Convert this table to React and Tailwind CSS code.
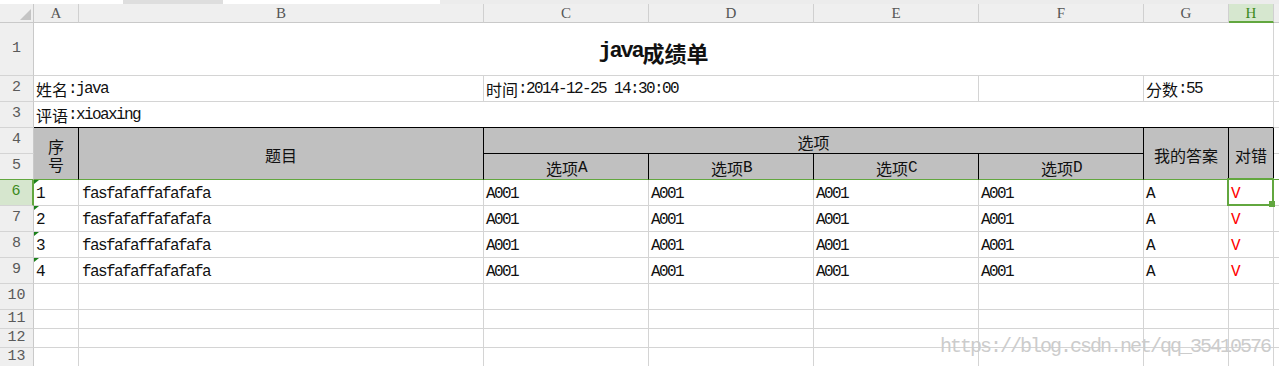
import React from "react";

const CJK = /[\u3000-\u9fff\uff00-\uffef]/;

function Mix({ text, lat = "tracking-[-1.6px]" }) {
  const parts = text.match(/[\u3000-\u9fff\uff00-\uffef]+|[^\u3000-\u9fff\uff00-\uffef]+/g) || [];
  return parts.map((p, i) =>
    CJK.test(p) ? (
      <span key={i} className="font-['Noto_Sans_CJK_SC',sans-serif]">
        {p}
      </span>
    ) : (
      <span key={i} className={lat}>
        {p}
      </span>
    )
  );
}

function Cell({ className = "", r = "border-r-[#d4d4d4]", b = "border-b-[#d4d4d4]", children }) {
  return <div className={`border-r border-b ${r} ${b} ${className}`}>{children}</div>;
}

function RH({ n, b = "border-b-[#d4d4d4]", sel = false }) {
  if (sel) {
    return (
      <div className={`border-r-2 border-b border-r-[#62a73f] ${b} bg-[#d6e6ce] flex items-center justify-center text-[15px] text-[#3b8a1c]`}>
        {n}
      </div>
    );
  }
  return (
    <div className={`border-r border-b border-r-[#c9c9c9] ${b} bg-[#efefef] flex items-center justify-center text-[15px] text-[#5a5a5a]`}>
      {n}
    </div>
  );
}

function Filler({ b = "border-b-[#d4d4d4]" }) {
  return <div className={`border-b ${b} bg-white`} />;
}

function ColHead({ l, sel = false }) {
  if (sel) {
    return (
      <div className="border-r border-b-2 border-r-[#d0d0d0] border-b-[#62a73f] bg-[#d6e7cf] flex items-center justify-center pt-[2px] font-['Liberation_Serif',serif] text-[15px] text-[#3b8a1c]">
        {l}
      </div>
    );
  }
  return (
    <div className="border-r border-b border-r-[#d0d0d0] border-b-[#c9c9c9] bg-[#efefef] flex items-center justify-center pt-[1px] font-['Liberation_Serif',serif] text-[15px] text-[#555555]">
      {l}
    </div>
  );
}

const txt = "flex items-center pl-[2px] pt-[1px] whitespace-nowrap text-[16px] leading-[20px] text-[#111111]";
const dtxt = "flex items-center pl-[2px] pt-[3px] whitespace-nowrap text-[16px] leading-[20px] text-[#111111]";
const hdr = "bg-[#c0c0c0] flex items-center justify-center pt-[2px] whitespace-nowrap text-[16px] leading-[20px] text-[#111111]";
const KR = "border-r-black";
const KB = "border-b-black";
const GB = "border-b-[#62a73f]";

function Tri() {
  return (
    <svg className="absolute left-0 top-0" width="5" height="5" viewBox="0 0 5 5">
      <polygon points="0,0 5,0 0,4" fill="#1a7f1a" />
    </svg>
  );
}

const data = [1, 2, 3, 4];

export default function App() {
  return (
    <div className="relative w-[1279px] h-[366px] overflow-hidden bg-white font-['Liberation_Mono','Noto_Sans_CJK_SC',monospace]">
      <div className="flex h-[4px] bg-[#ececec]">
        <div className="w-[123px] bg-white" />
        <div className="w-[100px] bg-[#dedede]" />
        <div className="w-[217px] bg-white" />
      </div>
      <div className="grid grid-cols-[34px_45px_405px_165px_165px_165px_165px_85px_45px_1fr] grid-rows-[19px_53px_repeat(9,26px)_repeat(3,19px)]">
        {/* column headers */}
        <div className="relative border-r border-b border-r-[#c9c9c9] border-b-[#c9c9c9] bg-[#efefef]">
          <svg className="absolute left-[20px] top-[5px]" width="12" height="12" viewBox="0 0 12 12">
            <polygon points="11,0 11,11 0,11" fill="#c4c4c4" />
          </svg>
        </div>
        <ColHead l="A" />
        <ColHead l="B" />
        <ColHead l="C" />
        <ColHead l="D" />
        <ColHead l="E" />
        <ColHead l="F" />
        <ColHead l="G" />
        <ColHead l="H" sel />
        <div className="border-b border-b-[#c9c9c9] bg-[#efefef]" />

        {/* row 1 */}
        <RH n="1" />
        <Cell className="col-span-8 flex items-center justify-center pt-[5px] text-[22px] leading-[26px] font-bold text-[#111111]">
          <Mix text="java成绩单" lat="tracking-[-2.2px]" />
        </Cell>
        <Filler />

        {/* row 2 */}
        <RH n="2" />
        <Cell className={`col-span-2 ${txt}`}>
          <Mix text="姓名:java" />
        </Cell>
        <Cell className={`col-span-3 ${txt}`}>
          <Mix text="时间:2014-12-25 14:30:00" />
        </Cell>
        <Cell className={txt} />
        <Cell className={`col-span-2 ${txt}`}>
          <Mix text="分数:55" />
        </Cell>
        <Filler />

        {/* row 3 */}
        <RH n="3" />
        <Cell className={`col-span-8 ${txt}`} b={KB}>
          <Mix text="评语:xioaxing" />
        </Cell>
        <Filler />

        {/* row 4 */}
        <RH n="4" />
        <Cell className={`row-span-2 ${hdr} flex-col`} r={KR} b={GB}>
          <span className="block h-[18px] leading-[18px] font-['Noto_Sans_CJK_SC',sans-serif]">序</span>
          <span className="block h-[18px] leading-[18px] font-['Noto_Sans_CJK_SC',sans-serif]">号</span>
        </Cell>
        <Cell className={`row-span-2 ${hdr}`} r={KR} b={GB}>
          <Mix text="题目" />
        </Cell>
        <Cell className={`col-span-4 ${hdr}`} r={KR} b={KB}>
          <Mix text="选项" />
        </Cell>
        <Cell className={`row-span-2 ${hdr}`} r={KR} b={GB}>
          <Mix text="我的答案" />
        </Cell>
        <Cell className={`row-span-2 ${hdr}`} r={KR} b={GB}>
          <Mix text="对错" />
        </Cell>
        <Filler />

        {/* row 5 */}
        <RH n="5" b={GB} />
        <Cell className={hdr} r={KR} b={GB}>
          <Mix text="选项A" />
        </Cell>
        <Cell className={hdr} r={KR} b={GB}>
          <Mix text="选项B" />
        </Cell>
        <Cell className={hdr} r={KR} b={GB}>
          <Mix text="选项C" />
        </Cell>
        <Cell className={hdr} r={KR} b={GB}>
          <Mix text="选项D" />
        </Cell>
        <Filler b={GB} />

        {/* data rows */}
        {data.map((n, i) => (
          <React.Fragment key={n}>
            <RH n={String(i + 6)} sel={i === 0} />
            <Cell className={`relative ${dtxt}`}>
              <Tri />
              <Mix text={String(n)} />
            </Cell>
            <Cell className={`${dtxt} pl-[3px]`}>
              <Mix text="fasfafaffafafafa" />
            </Cell>
            <Cell className={dtxt}>
              <Mix text="A001" />
            </Cell>
            <Cell className={dtxt}>
              <Mix text="A001" />
            </Cell>
            <Cell className={dtxt}>
              <Mix text="A001" />
            </Cell>
            <Cell className={dtxt}>
              <Mix text="A001" />
            </Cell>
            <Cell className={dtxt}>
              <Mix text="A" />
            </Cell>
            <Cell className={`relative ${dtxt}`}>
              <span className="text-[#ff0000]">
                <Mix text="V" />
              </span>
              {i === 0 && (
                <div className="absolute -left-[2px] -top-[2px] -right-px -bottom-px z-10 border-2 border-[#62a73f] pointer-events-none">
                  <div className="absolute -right-[3px] -bottom-[3px] w-[6px] h-[6px] bg-[#62a73f]" />
                </div>
              )}
            </Cell>
            <Filler />
          </React.Fragment>
        ))}

        {/* empty rows */}
        {[10, 11, 12, 13].map((n) => (
          <React.Fragment key={n}>
            <RH n={String(n)} />
            <Cell />
            <Cell />
            <Cell />
            <Cell />
            <Cell />
            <Cell />
            <Cell />
            <Cell />
            <Filler />
          </React.Fragment>
        ))}
      </div>
      <div className="absolute left-[940px] top-[337px] z-20 whitespace-nowrap text-[20px] leading-none tracking-[-2px] text-[#cccccc] font-['Liberation_Mono',monospace]">
        https://blog.csdn.net/qq_35410576
      </div>
    </div>
  );
}
